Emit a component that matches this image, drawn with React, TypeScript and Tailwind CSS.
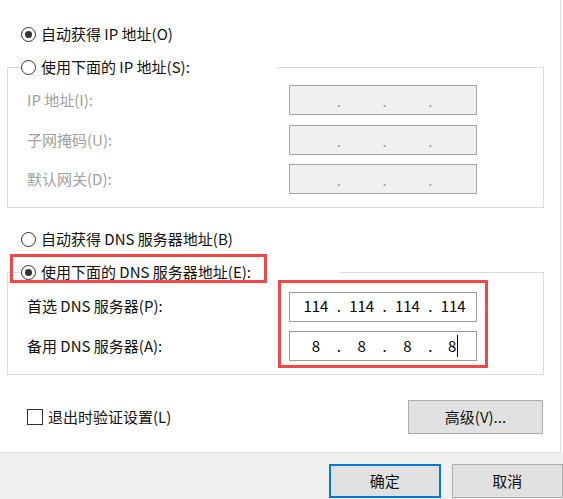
import React from "react";

const FONT = '"Noto Sans CJK SC", "Noto Sans", sans-serif';

function Radio({ checked, label, disabled }: { checked?: boolean; label: string; disabled?: boolean }) {
  return (
    <div className="flex items-center h-[20px]">
      <div className="w-[15px] h-[15px] rounded-full border border-[#333333] bg-white flex items-center justify-center">
        {checked && <div className="w-[7px] h-[7px] rounded-full bg-[#333333]" />}
      </div>
      <span className={"ml-[5px] text-[15px] leading-[20px] whitespace-nowrap " + (disabled ? "text-[#a0a0a0]" : "text-[#111111]")}>{label}</span>
    </div>
  );
}

function IpField({ values, disabled, cursor }: { values: string[]; disabled?: boolean; cursor?: boolean }) {
  return (
    <div
      className={
        "w-[188px] h-[30px] border flex items-center pl-[3px] " +
        (disabled ? "bg-[#f0f0f0] border-[#a8a8a8]" : "bg-white border-[#9a9a9a]")
      }
    >
      {values.map((v, i) => (
        <React.Fragment key={i}>
          <div className="w-[46px] h-full flex items-center justify-center text-[15px] text-black">
            <span>{v}</span>
            {cursor && i === 3 && <span className="inline-block w-px h-[22px] bg-black ml-px" />}
          </div>
          {i < 3 && (
            <div className={"w-0 h-full flex items-center justify-center overflow-visible text-[15px] " + (disabled ? "text-[#a0a0a0] pt-[2px] text-[12px]" : "text-black")}>
              .
            </div>
          )}
        </React.Fragment>
      ))}
    </div>
  );
}

export default function App() {
  return (
    <div className="w-[563px] h-[499px] bg-[#f0f0f0] relative overflow-hidden" style={{ fontFamily: FONT }}>
      <div className="bg-white h-[453px] flex">
        <div className="w-[561px] h-[453px] border-r border-b border-[#dcdcdc] flex flex-col">
          {/* Radio 1 */}
          <div className="ml-[21px] mt-[24px]">
            <Radio checked label="自动获得 IP 地址(O)" />
          </div>

          {/* Groupbox 1 */}
          <div className="ml-[7px] mt-[23px] w-[537px] h-[141px] border border-[#dcdcdc] flex flex-col">
            <div className="-mt-[11px] ml-[13px] w-[256px] bg-white">
              <Radio label="使用下面的 IP 地址(S):" />
            </div>
            <div className="flex flex-col mt-[8px]">
              {[
                ["IP 地址(I):", 0],
                ["子网掩码(U):", 10],
                ["默认网关(D):", 9],
              ].map(([label, mt]) => (
                <div key={label as string} className="flex items-center h-[30px]" style={{ marginTop: mt as number }}>
                  <span className="ml-[19px] w-[262px] text-[15px] text-[#a0a0a0]">{label}</span>
                  <IpField values={["", "", "", ""]} disabled />
                </div>
              ))}
            </div>
          </div>

          {/* Radio 3 */}
          <div className="ml-[21px] mt-[21px]">
            <Radio label="自动获得 DNS 服务器地址(B)" />
          </div>

          {/* Groupbox 2 */}
          <div className="ml-[7px] mt-[23px] w-[537px] h-[103px] border border-[#dcdcdc] flex flex-col">
            <div className="-mt-[11px] ml-[13px] w-[318px] bg-white">
              <Radio checked label="使用下面的 DNS 服务器地址(E):" />
            </div>
            <div className="flex flex-col mt-[10px]">
              <div className="flex items-center h-[29px]">
                <span className="ml-[19px] w-[262px] text-[15px] text-[#111111]">首选 DNS 服务器(P):</span>
                <IpField values={["114", "114", "114", "114"]} />
              </div>
              <div className="flex items-center h-[30px] mt-[10px]">
                <span className="ml-[19px] w-[262px] text-[15px] text-[#111111]">备用 DNS 服务器(A):</span>
                <IpField values={["8", "8", "8", "8"]} cursor />
              </div>
            </div>
          </div>

          {/* Checkbox + Advanced */}
          <div className="flex items-center mt-[25px] pr-[17px]">
            <div className="ml-[27px] w-[16px] h-[16px] border border-[#333333] bg-white" />
            <span className="ml-[5px] text-[15px] text-[#111111]">退出时验证设置(L)</span>
            <div className="flex-1" />
            <div className="w-[135px] h-[34px] bg-[#e1e1e1] border border-[#adadad] flex items-center justify-center text-[15px] text-[#111111]">
              高级(V)...
            </div>
          </div>
        </div>
        <div className="flex-1" />
      </div>

      {/* Bottom buttons */}
      <div className="flex mt-[11px] ml-[329px] gap-[11px]">
        <div className="w-[112px] h-[34px] bg-[#e1e1e1] border-2 border-[#0078d7] flex items-center justify-center text-[15px] text-[#111111]">
          确定
        </div>
        <div className="w-[112px] h-[34px] bg-[#e1e1e1] border border-[#adadad] flex items-center justify-center text-[15px] text-[#111111]">
          取消
        </div>
      </div>

      {/* Red annotation boxes */}
      <div className="absolute left-[10px] top-[254px] w-[257px] h-[29px] border-[3px] border-[#f04747]" />
      <div className="absolute left-[278px] top-[280px] w-[210px] h-[88px] border-[3px] border-[#f04747]" />
    </div>
  );
}
